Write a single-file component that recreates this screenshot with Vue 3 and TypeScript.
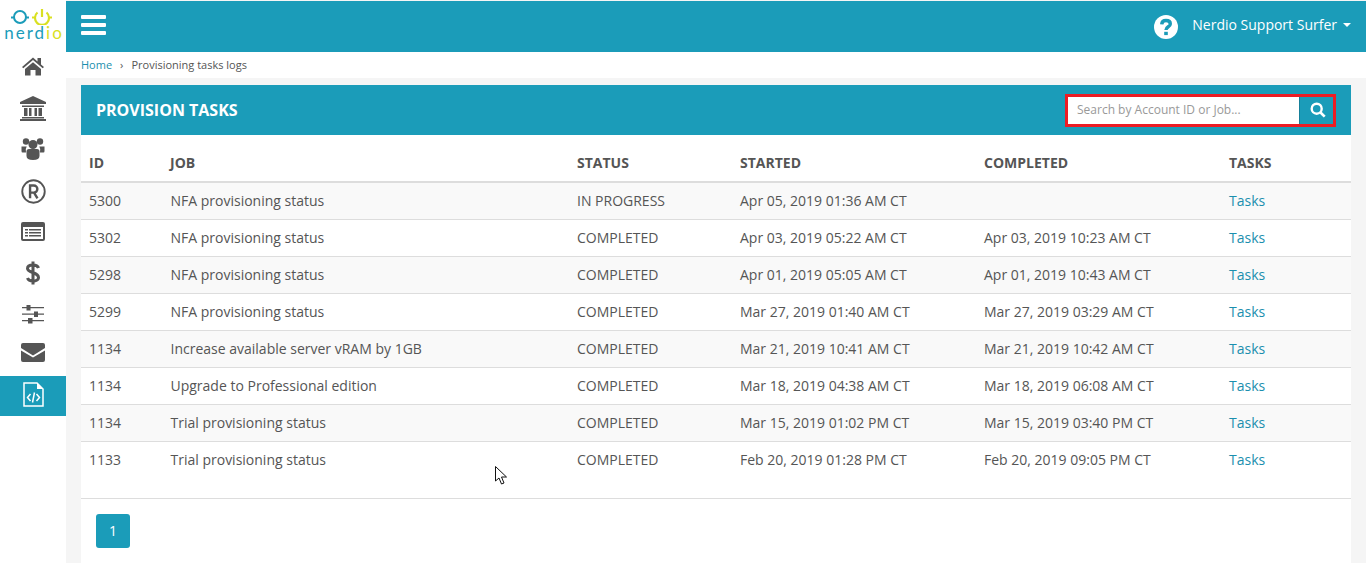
<script setup lang="ts">
interface Row { id: string; job: string; status: string; started: string; completed: string }
const rows: Row[] = [
  { id: '5300', job: 'NFA provisioning status', status: 'IN PROGRESS', started: 'Apr 05, 2019 01:36 AM CT', completed: '' },
  { id: '5302', job: 'NFA provisioning status', status: 'COMPLETED', started: 'Apr 03, 2019 05:22 AM CT', completed: 'Apr 03, 2019 10:23 AM CT' },
  { id: '5298', job: 'NFA provisioning status', status: 'COMPLETED', started: 'Apr 01, 2019 05:05 AM CT', completed: 'Apr 01, 2019 10:43 AM CT' },
  { id: '5299', job: 'NFA provisioning status', status: 'COMPLETED', started: 'Mar 27, 2019 01:40 AM CT', completed: 'Mar 27, 2019 03:29 AM CT' },
  { id: '1134', job: 'Increase available server vRAM by 1GB', status: 'COMPLETED', started: 'Mar 21, 2019 10:41 AM CT', completed: 'Mar 21, 2019 10:42 AM CT' },
  { id: '1134', job: 'Upgrade to Professional edition', status: 'COMPLETED', started: 'Mar 18, 2019 04:38 AM CT', completed: 'Mar 18, 2019 06:08 AM CT' },
  { id: '1134', job: 'Trial provisioning status', status: 'COMPLETED', started: 'Mar 15, 2019 01:02 PM CT', completed: 'Mar 15, 2019 03:40 PM CT' },
  { id: '1133', job: 'Trial provisioning status', status: 'COMPLETED', started: 'Feb 20, 2019 01:28 PM CT', completed: 'Feb 20, 2019 09:05 PM CT' }
]
</script>

<template>
  <div class="app">
    <aside class="side">
      <div class="logo">
        <svg class="logo-mark" width="66" height="16" viewBox="0 0 66 16">
          <circle cx="20" cy="8" r="6" fill="none" stroke="#1b9cb9" stroke-width="2" />
          <path d="M11 8.500H14M26 8.500H29" stroke="#1b9cb9" stroke-width="2" />
          <path d="M37.500 3.500a7 7 0 1 0 9 0" fill="none" stroke="#d9e021" stroke-width="2.200" />
          <path d="M42 0v8" stroke="#d9e021" stroke-width="2.200" />
          <path d="M32 8.500H35M49 8.500H52" stroke="#d9e021" stroke-width="2" />
        </svg>
        <div class="logo-text">nerd<span>io</span></div>
      </div>
      <nav class="nav">
        <a class="nav-item up1">
          <svg width="24" height="20" viewBox="0 0 24 20"><path fill="#555" d="M12 1.500 1 11l1.300 1.300L12 4l9.700 8.300L23 11l-3-2.600V2h-3.500v3.400zM4 13v6.500h5.500V14h5v5.500H20V13l-8-6.800z"/></svg>
        </a>
        <a class="nav-item down1">
          <svg width="28" height="25" viewBox="0 0 28 25"><path fill="#555" d="M14 0 1 6v2h26V6zM3 9.500h22V11H3zM5 12h3.500v8H5zM10 12h2.500v8H10zM15.500 12H18v8h-2.500zM19.500 12H23v8h-3.500zM3 21h22v1.500H3zM1 23h26v2H1z"/></svg>
        </a>
        <a class="nav-item">
          <svg width="24" height="23" viewBox="0 0 24 23"><g fill="#555"><circle cx="5" cy="4.500" r="3.200"/><circle cx="19" cy="4.500" r="3.200"/><path d="M0.500 9.500h5.200a7 7 0 0 0-0.700 6H1.500q-1 0-1-1.500zM23.500 9.500h-5.200a7 7 0 0 1 .7 6h3.500q1 0 1-1.500z"/><circle cx="12" cy="7.500" r="4.500"/><path d="M5.500 14.500q0-2.500 2.500-2.500h8q2.500 0 2.500 2.500V19q0 4-6.500 4t-6.500-4z"/></g></svg>
        </a>
        <a class="nav-item down2">
          <svg width="25" height="25" viewBox="0 0 24 24"><circle cx="12" cy="12" r="10.800" fill="none" stroke="#555" stroke-width="1.800"/><path fill="none" stroke="#555" stroke-width="2.300" d="M8.700 18.500V6.300h3.600a3.300 3.300 0 0 1 0 6.800H8.700M12.500 13l3.300 5.500"/></svg>
        </a>
        <a class="nav-item down1">
          <svg width="24" height="19" viewBox="0 0 24 19"><path fill="#555" fill-rule="evenodd" d="M2 0h20a2 2 0 0 1 2 2v15a2 2 0 0 1-2 2H2a2 2 0 0 1-2-2V2a2 2 0 0 1 2-2zM2 5v12h20V5z"/><path fill="#555" d="M4 7h3v1.500H4zM8 7h12v1.500H8zM4 10h3v1.500H4zM8 10h12v1.500H8zM4 13h3v1.500H4zM8 13h12v1.500H8z"/></svg>
        </a>
        <a class="nav-item down1">
          <svg width="14" height="26" viewBox="0 0 14 26"><path fill="none" stroke="#555" stroke-width="3" d="M12.500 8q-1-3-5.500-3-5.500 0-5.500 3.500C1.500 13 12.500 12 12.500 17.500c0 3.500-5.500 3.500-5.500 3.500q-4.500 0-5.500-3M7 1.500v23"/></svg>
        </a>
        <a class="nav-item down1">
          <svg width="22" height="20" viewBox="0 0 22 20"><g fill="#555"><path d="M0 3h22v1.200H0zM0 9.500h22v1.200H0zM0 16h22v1.200H0z"/><path d="M4.500 1h4v5.500h-4zM12 7.500h4V13h-4zM6 14h4.500v5.500H6z"/></g></svg>
        </a>
        <a class="nav-item up1">
          <svg width="24" height="19" viewBox="0 0 24 19"><path fill="#555" d="M2 0h20a2 2 0 0 1 2 2v3l-12 7.500L0 5V2a2 2 0 0 1 2-2zM0 7.500l12 7 12-7V17a2 2 0 0 1-2 2H2a2 2 0 0 1-2-2z"/></svg>
        </a>
        <a class="nav-item active">
          <svg width="21" height="25" viewBox="0 0 21 25"><path fill="none" stroke="#fff" stroke-width="1.500" d="M1 1h13l6 6v17H1z"/><path fill="#fff" d="M14 1v6h6z"/><path fill="none" stroke="#fff" stroke-width="1.500" d="M7.500 12 4.500 15.500 7.500 19M13.500 12l3 3.500-3 3.500M11.500 10.500l-2 10"/></svg>
        </a>
      </nav>
    </aside>
    <div class="main">
      <header class="topbar">
        <div class="burger"><i></i><i></i><i></i></div>
        <div class="user">
          <svg class="help" width="24" height="24" viewBox="0 0 24 24"><circle cx="12" cy="12" r="12" fill="#fff"/><path fill="none" stroke="#1b9cb9" stroke-width="3.400" d="M7.700 9.300Q8 5.500 12 5.500q4.300 0 4.300 3.400c0 3-4.300 2.700-4.300 6"/><rect x="10.200" y="16.800" width="3.600" height="3.300" fill="#1b9cb9"/></svg>
          <span class="user-name">Nerdio Support Surfer</span>
          <span class="caret"></span>
        </div>
      </header>
      <div class="crumbs">
        <a class="link">Home</a><span class="sep">›</span><span>Provisioning tasks logs</span>
      </div>
      <section class="panel">
        <div class="panel-head">
          <h1 class="title">PROVISION TASKS</h1>
          <div class="search">
            <span class="placeholder">Search by Account ID or Job...</span>
            <span class="search-btn">
              <svg width="16" height="16" viewBox="0 0 16 16"><circle cx="6.700" cy="6.700" r="5" fill="none" stroke="#fff" stroke-width="2.400"/><path d="m10.500 10.500 4.200 4.200" stroke="#fff" stroke-width="2.600"/></svg>
            </span>
          </div>
        </div>
        <div class="row head">
          <span>ID</span><span>JOB</span><span>STATUS</span><span>STARTED</span><span>COMPLETED</span><span>TASKS</span>
        </div>
        <div v-for="(r, i) in rows" :key="i" class="row body" :class="{ odd: i % 2 === 0, last: i === rows.length - 1 }">
          <span>{{ r.id }}</span><span class="job">{{ r.job }}</span><span>{{ r.status }}</span><span>{{ r.started }}</span><span>{{ r.completed }}</span><a class="link">Tasks</a>
        </div>
        <div class="pager"><span class="page">1</span></div>
      </section>
    </div>
    <svg class="cursor" width="13" height="20" viewBox="0 0 13 20"><path fill="#fff" stroke="#111" stroke-width="1" d="M.5.500v14.500l3.500-3 2.500 6 2.500-1-2.500-6h5z"/></svg>
  </div>
</template>

<style scoped>
.app {
  display: flex;
  height: 563px;
  overflow: hidden;
  position: relative;
  background: #f5f5f5;
  font-family: "Open Sans", sans-serif;
  font-size: 14px;
  color: #555;
}
.side {
  width: 66px;
  flex: none;
  background: #fff;
  display: flex;
  flex-direction: column;
}
.logo {
  height: 46px;
  padding-top: 9px;
  box-sizing: border-box;
  display: flex;
  flex-direction: column;
  align-items: center;
}
.logo-mark { display: block; flex: none; }
.logo-text {
  font-family: "Lato", sans-serif;
  font-size: 17px;
  line-height: 14px;
  letter-spacing: 2px;
  color: #1b9cb9;
  margin-top: 1px;
  margin-right: -2px;
}
.logo-text span { color: #d9e021; }
.nav { display: flex; flex-direction: column; }
.nav-item {
  height: 41px;
  display: flex;
  align-items: center;
  justify-content: center;
}
.up1 svg { margin-bottom: 2px; }
.down1 svg { margin-top: 2px; }
.down2 svg { margin-top: 4px; }
.nav-item.active { background: #1b9cb9; height: 40px; margin-top: 2px; }
.active svg { margin-bottom: 4px; }
.main { flex: 1; min-width: 0; display: flex; flex-direction: column; }
.topbar {
  height: 51px;
  margin-top: 1px;
  background: #1b9cb9;
  display: flex;
  align-items: center;
  justify-content: space-between;
  padding: 0 15px;
  flex: none;
}
.burger { display: flex; flex-direction: column; gap: 4px; margin-bottom: 4px; }
.burger i { display: block; width: 25px; height: 4px; background: #fff; border-radius: 1px; }
.user { display: flex; align-items: center; color: #fff; font-size: 14px; margin-bottom: 4px; }
.help { margin-right: 14px; margin-top: 5px; margin-left: 1px; }
.user-name { font-size: 14px; }
.caret {
  width: 0;
  height: 0;
  margin-left: 6px;
  border-left: 4px solid transparent;
  border-right: 4px solid transparent;
  border-top: 4px solid #fff;
}
.crumbs {
  height: 24px;
  padding-bottom: 2px;
  flex: none;
  background: #fff;
  padding-left: 15px;
  display: flex;
  align-items: center;
  font-size: 11px;
  color: #555;
}
.sep { margin: 0 8px; color: #555; }
.link { color: #1b8fae; }
.panel {
  margin: 7px 15px 0;
  background: #fff;
  flex: 1;
  display: flex;
  flex-direction: column;
}
.panel-head {
  height: 50px;
  flex: none;
  background: #1b9cb9;
  display: flex;
  align-items: center;
  justify-content: space-between;
  padding: 0 15px;
}
.title { margin: 0; font-size: 16px; font-weight: 700; color: #fff; }
.search {
  width: 271px;
  height: 33px;
  box-sizing: border-box;
  border: 3px solid #ed1c24;
  display: flex;
  background: #fff;
}
.placeholder {
  flex: 1;
  font-size: 12px;
  line-height: 26px;
  padding-left: 9px;
  color: #999;
}
.search-btn {
  width: 34px;
  box-sizing: border-box;
  padding-left: 3px;
  background: #1b9cb9;
  display: flex;
  align-items: center;
  justify-content: center;
  border-left: 1px solid #16809a;
}
.row {
  display: grid;
  grid-template-columns: 81px 407px 163px 244px 245px 1fr;
  padding-left: 8px;
  flex: none;
}
.head {
  height: 37px;
  padding-top: 9px;
  align-items: center;
  font-weight: 700;
  border-bottom: 2px solid #ddd;
}
.body {
  height: 36px;
  line-height: 36px;
  border-bottom: 1px solid #ddd;
}
.job { padding-left: 0.5px; }
.odd { background: #f9f9f9; }
.last { height: 56px; }
.pager { padding: 15px; }
.page {
  display: flex;
  align-items: center;
  justify-content: center;
  width: 34px;
  height: 33px;
  padding-bottom: 1px;
  background: #1b9cb9;
  color: #fff;
  border-radius: 3px;
}
.cursor { position: absolute; left: 495px; top: 466px; }
</style>
